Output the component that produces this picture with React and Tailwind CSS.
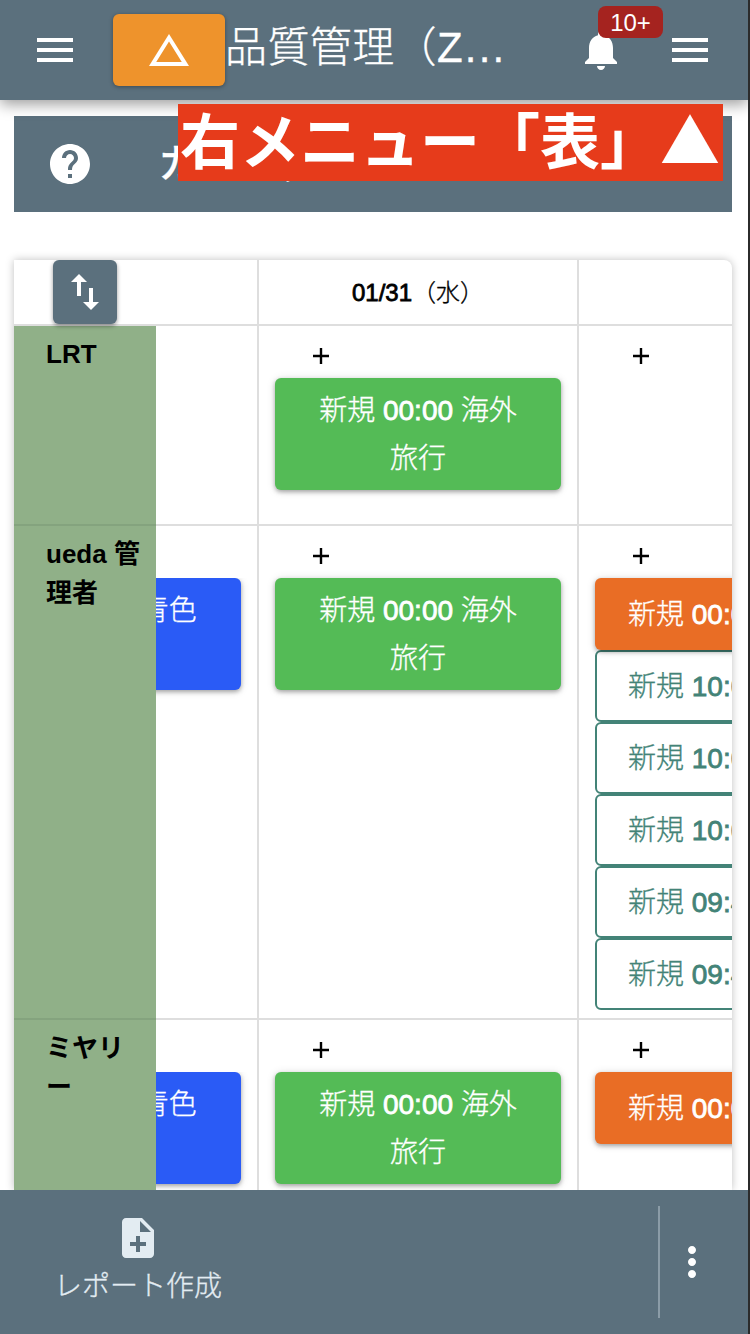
const ICONS = {
  menu: 'M3 18h18v-2H3v2zm0-5h18v-2H3v2zm0-7v2h18V6H3z',
  triangle: 'M12 7.77L18.39 18H5.61L12 7.77M12 4L2 20h20L12 4z',
  bell: 'M12 22c1.1 0 2-.9 2-2h-4c0 1.1.89 2 2 2zm6-6v-5c0-3.07-1.64-5.64-4.5-6.32V4c0-.83-.67-1.5-1.5-1.5s-1.5.67-1.5 1.5v.68C7.63 5.36 6 7.92 6 11v5l-2 2v1h16v-1l-2-2z',
  help: 'M12 2C6.48 2 2 6.48 2 12s4.48 10 10 10 10-4.48 10-10S17.52 2 12 2zm1 17h-2v-2h2v2zm2.07-7.75l-.9.92C13.45 12.9 13 13.5 13 15h-2v-.5c0-1.1.45-2.1 1.17-2.83l1.24-1.26c.37-.36.59-.86.59-1.41 0-1.1-.9-2-2-2s-2 .9-2 2H8c0-2.21 1.79-4 4-4s4 1.79 4 4c0 .88-.36 1.68-.93 2.25z',
  swap: 'M9 3L5 6.99h3V14h2V6.99h3L9 3zm7 14.01V10h-2v7.01h-3L15 21l4-3.99h-3z',
  noteAdd: 'M14 2H6c-1.1 0-1.99.9-1.99 2L4 20c0 1.1.89 2 1.99 2H18c1.1 0 2-.9 2-2V8l-6-6zm2 14h-3v3h-2v-3H8v-2h3v-3h2v3h3v2zm-3-7V3.5L18.5 9H13z',
  more: 'M12 8c1.1 0 2-.9 2-2s-.9-2-2-2-2 .9-2 2 .9 2 2 2zm0 2c-1.1 0-2 .9-2 2s.9 2 2 2 2-.9 2-2-.9-2-2-2zm0 6c-1.1 0-2 .9-2 2s.9 2 2 2 2-.9 2-2-.9-2-2-2z',
};

function Icon({ name, className = '' }) {
  return (
    <svg viewBox="0 0 24 24" fill="currentColor" className={`size-12 shrink-0 ${className}`}>
      <path d={ICONS[name]} />
    </svg>
  );
}

function Plus() {
  return (
    <svg viewBox="0 0 16 16" className="ml-[54px] mt-[22px] mb-[14px] size-4 text-black">
      <path d="M8 0v16M0 8h16" stroke="currentColor" strokeWidth="2.4" />
    </svg>
  );
}

function Label({ time, title }) {
  return (
    <>
      新規 <span className="[-webkit-text-stroke:0.8px_currentColor]">{time}</span>
      {title && ` ${title}`}
    </>
  );
}

const cardShadow = 'shadow-[0_2px_4px_rgba(0,0,0,0.3),0_1px_10px_rgba(0,0,0,0.12)]';

function GreenCard() {
  return (
    <div className={`ml-4 h-28 w-[286px] rounded-md bg-[#54bb56] px-8 pt-[9px] text-center text-[28px] leading-[48px] text-white ${cardShadow}`}>
      <Label time="00:00" title="海外" />
      <br />
      旅行
    </div>
  );
}

function BlueCard() {
  return (
    <div className="flex justify-end overflow-hidden pb-4 pr-4">
      <div className={`h-28 w-[286px] shrink-0 rounded-md bg-[#2a5bf6] pt-[9px] text-center text-[28px] leading-[48px] whitespace-nowrap text-white ${cardShadow}`}>
        <Label time="00:00" title="青色" />
      </div>
    </div>
  );
}

function OrangeCard() {
  return (
    <div className={`relative ml-4 h-[72px] w-[286px] rounded-md bg-[#e96d25] pl-[33px] text-[28px] leading-[74px] whitespace-nowrap text-white ${cardShadow}`}>
      <Label time="00:00" />
    </div>
  );
}

function OutlineCard({ time }) {
  return (
    <div className="ml-4 h-[72px] w-[286px] rounded-md border-2 border-[#438377] pl-[31px] text-[28px] leading-[70px] whitespace-nowrap text-[#438377]">
      <Label time={time} />
    </div>
  );
}

function Row({ name, height, blue, orange, times = [] }) {
  return (
    <div className={`grid shrink-0 grid-cols-[245px_320px_153px] ${height}`}>
      <div className="flex min-w-0 border-r-2 border-[#dedede]">
        <div className="w-[142px] shrink-0 border-b-2 border-[#84a37e] bg-[#90b088] pt-[9px] pr-3 pl-8 text-[26px] leading-[39px] font-bold break-all text-black [-webkit-text-stroke:0px]">
          {name}
        </div>
        <div className="min-w-0 flex-1 overflow-hidden border-b-2 border-[#dedede] pt-[52px]">
          {blue && <BlueCard />}
        </div>
      </div>
      <div className="border-r-2 border-b-2 border-[#dedede]">
        <Plus />
        <GreenCard />
      </div>
      <div className="overflow-hidden border-b-2 border-[#dedede]">
        <Plus />
        {orange && <OrangeCard />}
        {times.map((time, i) => (
          <OutlineCard key={i} time={time} />
        ))}
      </div>
    </div>
  );
}

export default function App() {
  return (
    <div className="relative flex h-[1334px] w-[750px] flex-col overflow-hidden border-r-2 border-[#2b2b2b] bg-white font-['Liberation_Sans','Noto_Sans_CJK_JP',sans-serif] font-light [-webkit-text-stroke:0.3px_currentColor]">
      <header className="relative z-10 flex h-[100px] shrink-0 items-center bg-[#5b707d] pl-[31px] text-white shadow-[0_4px_14px_rgba(0,0,0,0.4)]">
        <Icon name="menu" />
        <button className="ml-[34px] flex h-[72px] w-28 items-center justify-center rounded-md bg-[#ee932c] shadow-[0_1px_4px_rgba(0,0,0,0.35)]">
          <Icon name="triangle" />
        </button>
        <h1 className="mb-1 w-[312px] text-[42px] leading-[60px] tracking-[0.4px] whitespace-nowrap">
          品質管理（<span className="tracking-[2.2px]">Z...</span>
        </h1>
        <div className="relative ml-10">
          <Icon name="bell" />
          <span className="absolute -top-5 left-[21px] flex h-8 w-[65px] items-center justify-center rounded-lg bg-[#a5231f] pt-0.5 text-[24px] text-white [-webkit-text-stroke:0px]">
            10+
          </span>
        </div>
        <Icon name="menu" className="ml-[41px]" />
      </header>

      <main className="flex min-h-0 flex-1 flex-col pt-4 pr-4 pl-3.5">
        <div className="flex h-24 shrink-0 items-center bg-[#5b707d] pl-8 text-white">
          <Icon name="help" />
          <h2 className="ml-[64px] text-[40px] leading-none font-medium">カレンダー</h2>
        </div>
        <section className="mt-12 flex min-h-0 w-[718px] flex-1 flex-col overflow-hidden rounded-tr-lg bg-white shadow-[0_0_8px_rgba(0,0,0,0.25)]">
          <div className="grid h-[66px] shrink-0 grid-cols-[245px_320px_153px]">
            <div className="border-r-2 border-b-2 border-[#dedede] pl-[39px]">
              <button className="relative flex size-16 items-center justify-center rounded-md bg-[#5b707d] text-white shadow-[0_2px_4px_rgba(0,0,0,0.4)]">
                <Icon name="swap" />
              </button>
            </div>
            <div className="flex items-center justify-center border-r-2 border-b-2 border-[#dedede] pt-0.5 text-[24px] text-black">
              <span className="[-webkit-text-stroke:0.8px_currentColor]">01/31</span>
              <span>（水）</span>
            </div>
            <div className="border-b-2 border-[#dedede]" />
          </div>
          <Row name="LRT" height="h-[200px]" />
          <Row
            name="ueda 管理者"
            height="h-[494px]"
            blue
            orange
            times={['10:00', '10:00', '10:00', '09:45', '09:45']}
          />
          <Row name="ミヤリー" height="h-[200px]" blue orange />
        </section>
      </main>

      <footer className="relative flex h-36 shrink-0 items-center bg-[#5b707d]">
        <button className="flex w-[276px] flex-col items-center text-[#e3ecf2]">
          <Icon name="noteAdd" />
          <span className="mt-0.5 text-[28px] leading-[46px]">レポート作成</span>
        </button>
        <div className="ml-auto h-28 w-0.5 bg-[#8b9ca7]" />
        <div className="flex w-[88px] items-center pl-2 text-white">
          <Icon name="more" />
        </div>
      </footer>

      <div className="absolute top-[104px] left-[178px] z-20 h-[77px] w-[545px] bg-[#e63b1b] pl-0.5 font-['Noto_Sans_CJK_JP',sans-serif] text-[60px] leading-[68px] font-bold whitespace-nowrap text-white [-webkit-text-stroke:0px]">
        右メニュー「表」▲
      </div>
    </div>
  );
}
